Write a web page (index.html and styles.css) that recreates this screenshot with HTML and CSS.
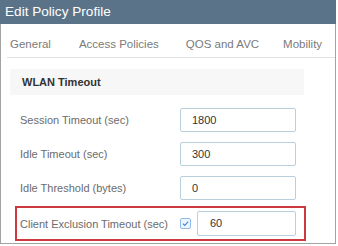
FILE: index.html
```html
<!DOCTYPE html>
<html>
<head>
<meta charset="utf-8">
<link rel="stylesheet" href="styles.css">
</head>
<body>
<div class="panel">
  <div class="header">Edit Policy Profile</div>
  <div class="tabs">
    <span class="tab">General</span>
    <span class="tab">Access Policies</span>
    <span class="tab">QOS and AVC</span>
    <span class="tab">Mobility</span>
  </div>
  <div class="section">WLAN Timeout</div>
  <div class="rows">
    <div class="row"><span class="label">Session Timeout (sec)</span><div class="field">1800</div></div>
    <div class="row"><span class="label">Idle Timeout (sec)</span><div class="field">300</div></div>
    <div class="row"><span class="label">Idle Threshold (bytes)</span><div class="field">0</div></div>
  </div>
  <div class="highlight">
    <span class="label">Client Exclusion Timeout (sec)</span>
    <span class="check"><svg width="11" height="11" viewBox="0 0 11 11"><path d="M3 5.8 L4.8 7.4 L8.2 3.6" fill="none" stroke="#3a8ee0" stroke-width="1.2"/></svg></span>
    <div class="field wide">60</div>
  </div>
</div>
</body>
</html>
```
FILE: styles.css
```css
* { box-sizing: border-box; }
body { margin: 0; background: #fff; font-family: "Liberation Sans", Arial, sans-serif; }
.panel {
  width: 336px; height: 244px;
  border: 1px solid #a3a3a3; border-top: none;
  background: #fff;
}
.header {
  height: 24px; margin: 0 -1px;
  background: #5a7388; color: #fff;
  font-size: 13.6px; line-height: 24px;
  padding-left: 5px;
}
.tabs {
  display: flex; gap: 28px;
  margin-left: 6px; height: 34px;
  padding: 8px 0 0 3px;
  border-bottom: 1px solid #e2e2e2;
  font-size: 11.5px; line-height: 25px; color: #7a7a7a;
}
.tab:nth-child(3) { margin-left: -1px; }
.tab:nth-child(4) { margin-left: -4px; }
.section {
  margin: 11px 0 0 9px; width: 294px; height: 26px;
  background: #f7f7f7; padding-left: 12px;
  font-size: 11px; font-weight: bold; line-height: 26px; color: #333;
}
.rows { display: flex; flex-direction: column; gap: 10px; margin: 13px 0 0 19px; }
.row { display: flex; align-items: center; }
.label { width: 160px; font-size: 11px; color: #6b6b6b; }
.field {
  width: 116px; height: 24px;
  border: 1px solid #b9cfdc; border-radius: 2px;
  padding-left: 11px; font-size: 11px; line-height: 22px; color: #333;
}
.highlight {
  display: flex; align-items: center;
  margin: 6px 0 0 14px; width: 291px; height: 35px;
  border: 2px solid #cc3a40;
  padding-left: 3px;
}
.highlight .label { width: 160px; }
.check {
  width: 11px; height: 11px; display: flex;
  border: 1px solid #8fbbe6; border-radius: 2px; background: #eef5fd;
  margin-right: 6px;
}
.check svg { margin: -1px; }
.field.wide { width: 99px; height: 25px; padding-left: 12px; line-height: 23px; }
```
